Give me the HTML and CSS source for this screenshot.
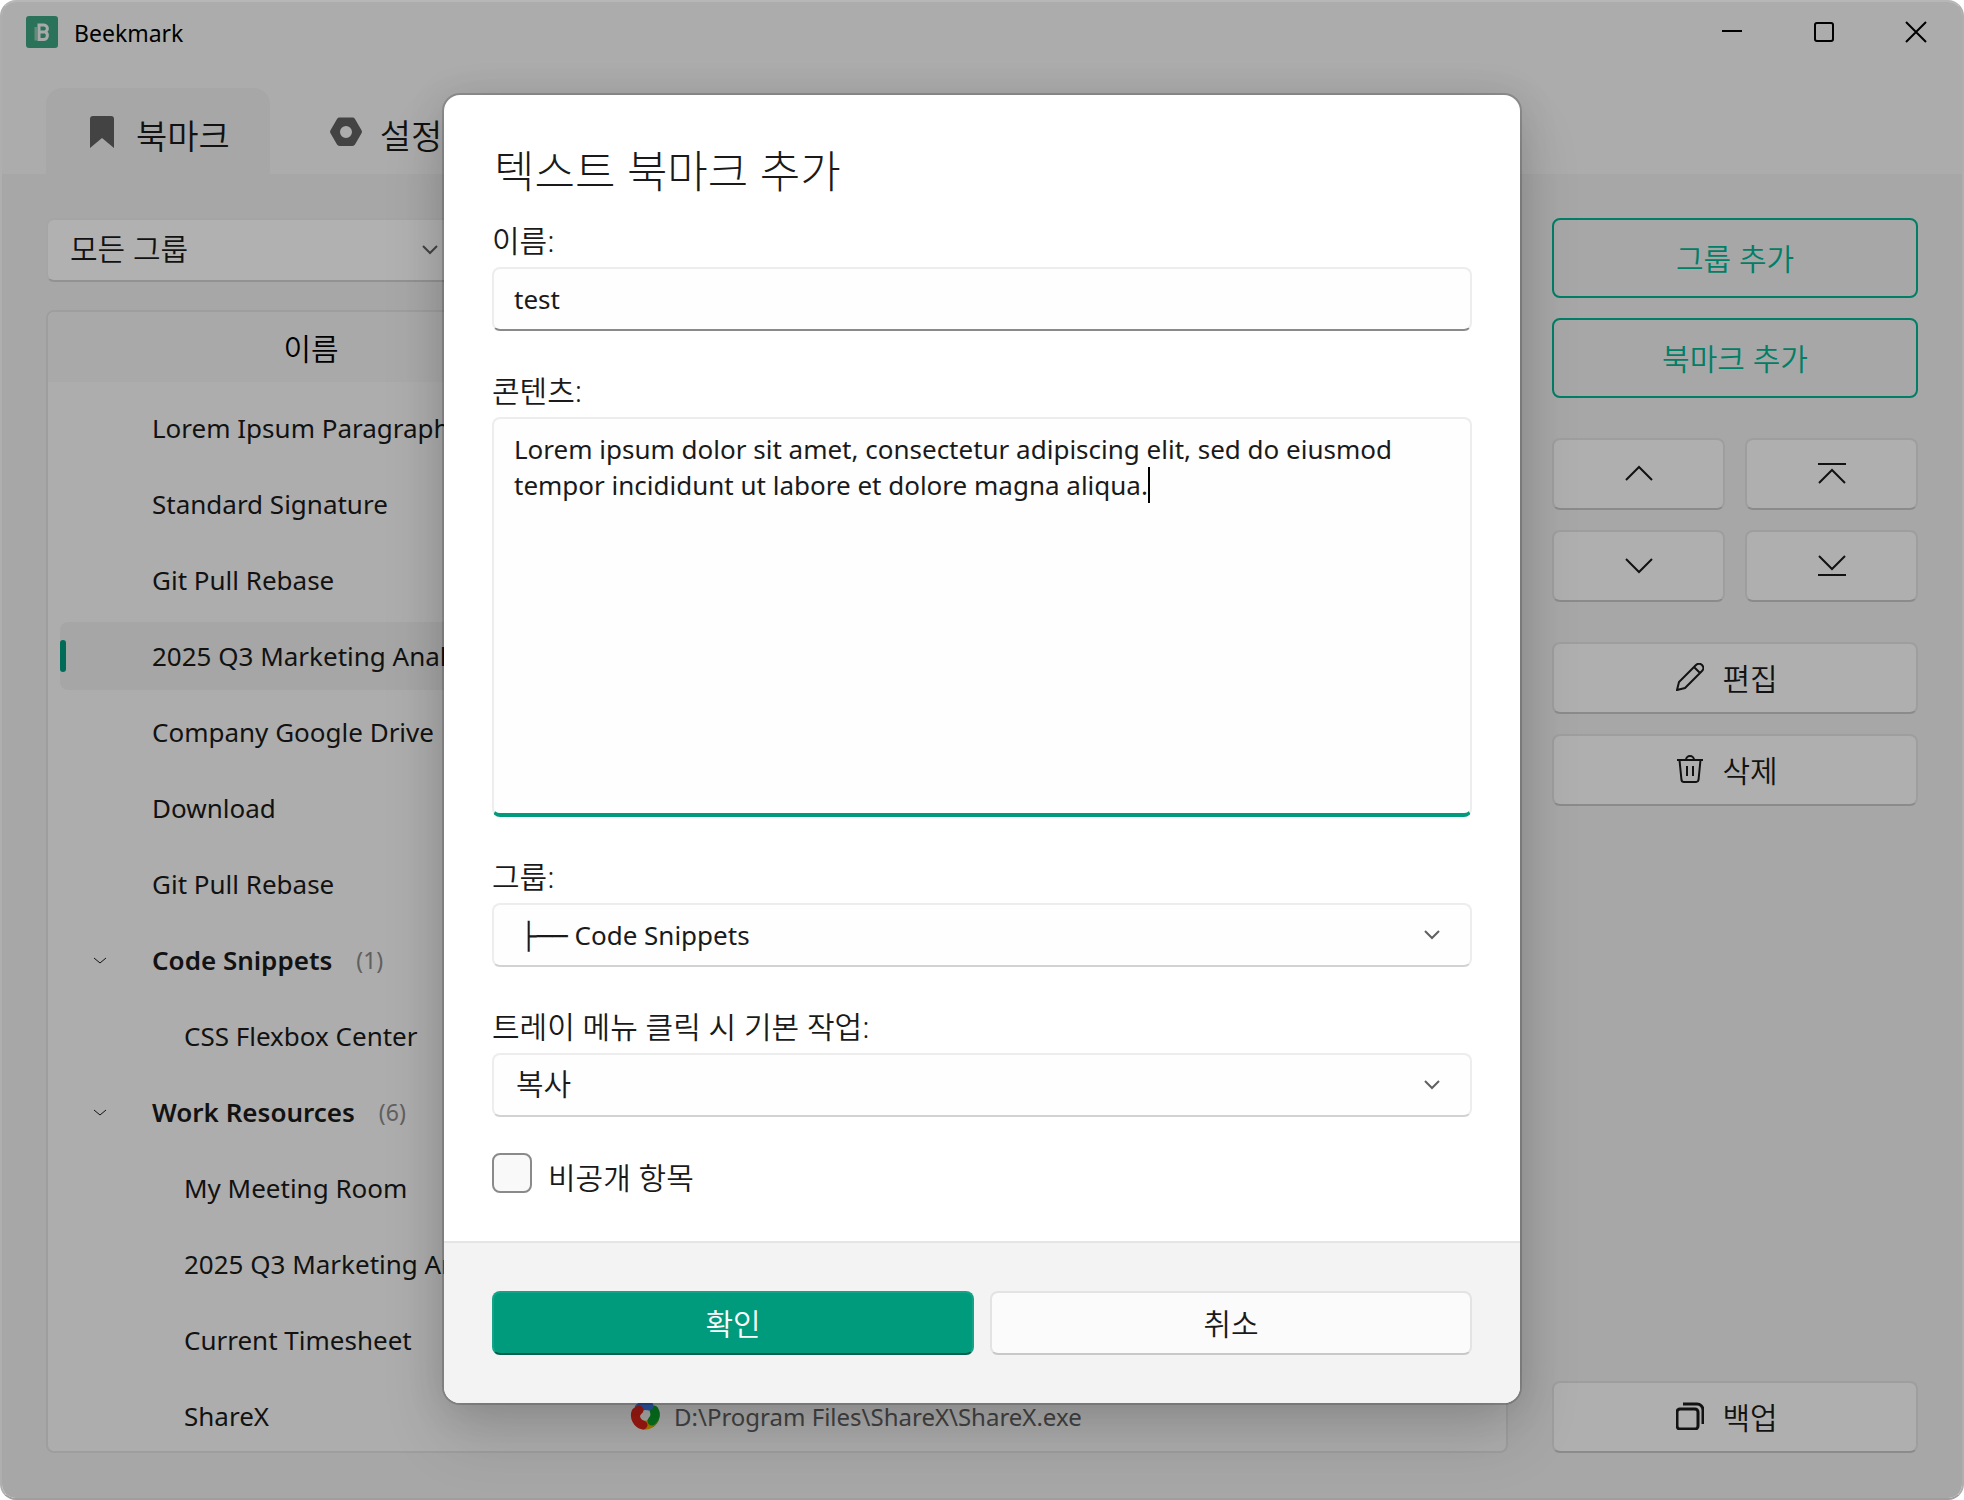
FILE: index.html
```
<!DOCTYPE html>
<html lang="ko">
<head>
    <meta charset="UTF-8">
    <meta name="viewport" content="width=device-width, initial-scale=1.0">
    <title>Beekmark</title>
    <link rel="stylesheet" href="styles.css">
</head>
<body>
    <div class="window">
        <header class="titlebar">
            <svg class="logo" viewBox="0 0 32 32">
                <rect width="32" height="32" rx="3" fill="#3da480"/>
                <path d="M8.500 11h2.500v13.500H8.500z" fill="#8fc9b4"/>
                <path d="M13 9v14.500h5a4 4 0 0 0 1-7.600A3.600 3.600 0 0 0 17 9zM13 16h5" fill="none" stroke="#f3f3f3" stroke-width="3"/>
            </svg>
            <span class="app-name">Beekmark</span>
            <div class="window-buttons">
                <button type="button" aria-label="Minimize"><svg viewBox="0 0 24 24"><path d="M2 11h20"/></svg></button>
                <button type="button" aria-label="Maximize"><svg viewBox="0 0 24 24"><rect x="3" y="3" width="18" height="18" rx="2"/></svg></button>
                <button type="button" aria-label="Close"><svg viewBox="0 0 24 24"><path d="M2 2l20 20M22 2L2 22"/></svg></button>
            </div>
        </header>

        <nav class="tabs">
            <a href="#bookmarks" class="tab active">
                <svg viewBox="0 0 32 32"><path d="M7 0h18a3 3 0 0 1 3 3v29L16 22 4 32V3a3 3 0 0 1 3-3z"/></svg>
                북마크
            </a>
            <a href="#settings" class="tab">
                <svg viewBox="0 0 32 32"><path fill-rule="evenodd" d="M9.500 1.500h13a3 3 0 0 1 2.500 1.400l6.500 11.300a3 3 0 0 1 0 3L25 28.600a3 3 0 0 1-2.500 1.400h-13A3 3 0 0 1 7 28.600L.5 17.200a3 3 0 0 1 0-3L7 2.900a3 3 0 0 1 2.500-1.400zM16 10a6 6 0 1 0 0 12 6 6 0 0 0 0-12z"/></svg>
                설정
            </a>
        </nav>

        <main class="content">
            <section class="bookmarks">
                <div class="select-box group-filter">
                    <select aria-label="그룹">
                        <option>모든 그룹</option>
                    </select>
                    <svg class="arrow" viewBox="0 0 16 10"><path d="M1 1l7 7 7-7"/></svg>
                </div>

                <div class="tree">
                    <table>
                        <colgroup>
                            <col class="col-name">
                            <col>
                        </colgroup>
                        <thead>
                            <tr><th>이름</th><th></th></tr>
                        </thead>
                        <tbody>
                            <tr><td><div class="item">Lorem Ipsum Paragraph</div></td><td></td></tr>
                            <tr><td><div class="item">Standard Signature</div></td><td></td></tr>
                            <tr><td><div class="item">Git Pull Rebase</div></td><td></td></tr>
                            <tr><td><div class="item selected">2025 Q3 Marketing Analysis</div></td><td></td></tr>
                            <tr><td><div class="item">Company Google Drive</div></td><td></td></tr>
                            <tr><td><div class="item">Download</div></td><td></td></tr>
                            <tr><td><div class="item">Git Pull Rebase</div></td><td></td></tr>
                            <tr><td><div class="item group"><svg viewBox="0 0 12 7"><path d="M0 1l6 5 6-5"/></svg>Code Snippets <span class="count">(1)</span></div></td><td></td></tr>
                            <tr><td><div class="item child">CSS Flexbox Center</div></td><td></td></tr>
                            <tr><td><div class="item group"><svg viewBox="0 0 12 7"><path d="M0 1l6 5 6-5"/></svg>Work Resources <span class="count">(6)</span></div></td><td></td></tr>
                            <tr><td><div class="item child">My Meeting Room</div></td><td></td></tr>
                            <tr><td><div class="item child">2025 Q3 Marketing Analysis</div></td><td></td></tr>
                            <tr><td><div class="item child">Current Timesheet</div></td><td></td></tr>
                            <tr>
                                <td><div class="item child">ShareX</div></td>
                                <td>
                                    <div class="value">
                                        <svg viewBox="0 0 30 30">
                                            <g fill="none" stroke-width="9" stroke-linecap="round">
                                                <path d="M24 9A10 10 0 0 1 21 22" stroke="#0ba52c"/>
                                                <path d="M24 18A10 10 0 0 1 13 24" stroke="#efb400"/>
                                                <path d="M13 24A10 10 0 0 1 6 11" stroke="#e3261b"/>
                                                <path d="M9 7A10 10 0 0 1 19 5" stroke="#3f7ee8"/>
                                                <path d="M6 13A10 10 0 0 1 9 9" stroke="#e3261b"/>
                                                <path d="M25 12A10 10 0 0 1 22 20" stroke="#0ba52c"/>
                                            </g>
                                        </svg>
                                        D:\Program Files\ShareX\ShareX.exe
                                    </div>
                                </td>
                            </tr>
                        </tbody>
                    </table>
                </div>
            </section>

            <aside class="actions">
                <button type="button" class="btn outline">그룹 추가</button>
                <button type="button" class="btn outline">북마크 추가</button>
                <div class="move-buttons">
                    <button type="button" class="btn" aria-label="위로"><svg viewBox="0 0 32 32"><path d="M3 23l13-13 13 13"/></svg></button>
                    <button type="button" class="btn" aria-label="맨 위로"><svg viewBox="0 0 32 32"><path d="M2 7h28M3 26l13-13 13 13"/></svg></button>
                    <button type="button" class="btn" aria-label="아래로"><svg viewBox="0 0 32 32"><path d="M3 10l13 13 13-13"/></svg></button>
                    <button type="button" class="btn" aria-label="맨 아래로"><svg viewBox="0 0 32 32"><path d="M3 7l13 13 13-13M2 26h28"/></svg></button>
                </div>
                <button type="button" class="btn icon-btn">
                    <svg viewBox="0 0 28 28"><path d="M1 27l2-8L20 2a4.200 4.200 0 0 1 6 6L9 25zM18 4l6 6"/></svg>
                    편집
                </button>
                <button type="button" class="btn icon-btn">
                    <svg viewBox="0 0 28 28"><path d="M1 5h26M10 5a4 4 0 0 1 8 0M3.500 5l2 20a2.500 2.500 0 0 0 2.500 2h12a2.500 2.500 0 0 0 2.500-2l2-20M11 11v10M17 11v10"/></svg>
                    삭제
                </button>
                <button type="button" class="btn icon-btn backup">
                    <svg viewBox="0 0 28 28"><rect x="1" y="7" width="21" height="20" rx="3"/><path d="M7 2h14a6 6 0 0 1 6 6v14"/></svg>
                    백업
                </button>
            </aside>
        </main>

        <div class="overlay">
            <form class="dialog" role="dialog" aria-labelledby="dialog-title">
                <div class="dialog-body">
                    <h1 id="dialog-title">텍스트 북마크 추가</h1>

                    <label for="name">이름:</label>
                    <input type="text" id="name" class="field" value="test">

                    <label for="contents">콘텐츠:</label>
                    <div class="text-box">
                        <textarea id="contents" class="field" spellcheck="false">Lorem ipsum dolor sit amet, consectetur adipiscing elit, sed do eiusmod tempor incididunt ut labore et dolore magna aliqua.</textarea>
                        <span class="caret"></span>
                    </div>

                    <label for="group">그룹:</label>
                    <div class="select-box">
                        <select id="group">
                            <option>&nbsp;├── Code Snippets</option>
                        </select>
                        <svg class="arrow" viewBox="0 0 16 10"><path d="M1 1l7 7 7-7"/></svg>
                    </div>

                    <label for="action">트레이 메뉴 클릭 시 기본 작업:</label>
                    <div class="select-box">
                        <select id="action" class="korean">
                            <option>복사</option>
                        </select>
                        <svg class="arrow" viewBox="0 0 16 10"><path d="M1 1l7 7 7-7"/></svg>
                    </div>

                    <div class="check-row">
                        <input type="checkbox" id="private">
                        <label for="private">비공개 항목</label>
                    </div>
                </div>

                <div class="dialog-footer">
                    <button type="submit" class="btn primary">확인</button>
                    <button type="button" class="btn">취소</button>
                </div>
            </form>
        </div>
    </div>
</body>
</html>
```
FILE: styles.css
```
* {
    box-sizing: border-box;
}

body {
    margin: 0;
    background-color: #fff;
    color: #1a1a1a;
    font-family: "Noto Sans", "DejaVu Sans", "Noto Sans CJK KR", sans-serif;
    font-size: 26px;
}

button, input, select, textarea {
    font-family: inherit;
    font-size: inherit;
    color: inherit;
}

svg {
    flex: none;
    fill: none;
    stroke: currentColor;
    stroke-width: 2;
}

.window {
    position: relative;
    display: flex;
    flex-direction: column;
    height: 100vh;
    border: 2px solid;
    border-color: #b7b7b7 #afafaf #9e9e9e;
    border-radius: 16px;
    background-color: #f7f7f7;
    overflow: hidden;
}

/* Title bar */
.titlebar {
    display: flex;
    align-items: center;
    height: 60px;
    padding-left: 24px;
    color: #000;
}

.logo {
    width: 32px;
    height: 32px;
    stroke: none;
}

.app-name {
    margin-left: 16px;
    padding-top: 2px;
    font-size: 23px;
}

.window-buttons {
    display: flex;
    margin-left: auto;
}

.window-buttons button {
    display: flex;
    justify-content: center;
    align-items: center;
    width: 92px;
    height: 60px;
    padding: 0;
    border: none;
    background: none;
}

.window-buttons svg {
    width: 24px;
    height: 24px;
}

/* Tabs */
.tabs {
    display: flex;
    margin-top: 26px;
    padding: 0 44px;
}

.tab {
    display: flex;
    align-items: center;
    gap: 18px;
    height: 86px;
    padding: 6px 40px 0;
    border-radius: 16px 16px 0 0;
    color: #1a1a1a;
    font-size: 34px;
    font-weight: 350;
    text-decoration: none;
}

.tab + .tab {
    padding-left: 60px;
}

.tab.active {
    background-color: #efefef;
}

.tab svg {
    width: 32px;
    height: 32px;
    margin-bottom: 4px;
    fill: #606060;
    stroke: none;
}

/* Content */
.content {
    display: flex;
    flex: 1;
    gap: 44px;
    min-height: 0;
    padding: 44px 44px 45px;
    background-color: #efefef;
}

.bookmarks {
    display: flex;
    flex: 1;
    flex-direction: column;
    gap: 28px;
    min-width: 0;
}

.group-filter {
    width: 424px;
}

.tree {
    flex: 1;
    min-height: 0;
    border: 2px solid #e2e2e2;
    border-radius: 8px;
    background-color: #f8f8f8;
    overflow: hidden;
}

.tree table {
    width: 100%;
    border-collapse: collapse;
    table-layout: fixed;
}

.col-name {
    width: 526px;
}

.tree th {
    height: 70px;
    padding: 0;
    background-color: #f2f2f2;
    color: #000;
    font-size: 30px;
    font-weight: 350;
}

.tree td {
    padding: 4px 0;
}

.tree tbody tr:first-child td {
    padding-top: 12px;
}

.item {
    position: relative;
    display: flex;
    align-items: center;
    height: 68px;
    margin-left: 12px;
    padding-left: 92px;
    border-radius: 8px;
    white-space: nowrap;
}

.item.child {
    padding-left: 124px;
}

.item.selected {
    background-color: #eee;
}

.item.selected::before {
    content: "";
    position: absolute;
    left: 0;
    width: 6px;
    height: 32px;
    border-radius: 3px;
    background-color: #009b7d;
}

.item.group {
    padding-left: 34px;
    font-weight: 600;
}

.item.group svg {
    width: 12px;
    height: 7px;
    margin-right: 46px;
    stroke-width: 1;
}

.count {
    margin-left: 24px;
    color: #8a8a8a;
    font-size: 23px;
    font-weight: 400;
}

.value {
    display: flex;
    align-items: center;
    gap: 14px;
    padding-left: 56px;
    color: #606060;
    font-size: 24px;
}

.value svg {
    width: 30px;
    height: 30px;
    stroke: none;
}

/* Buttons */
.btn {
    display: flex;
    justify-content: center;
    align-items: center;
    height: 72px;
    padding: 0 0 2px;
    border: 2px solid #e3e3e3;
    border-bottom-color: #c8c8c8;
    border-radius: 8px;
    background-color: #fbfbfb;
    font-size: 30px;
    font-weight: 350;
}

.actions {
    display: flex;
    flex-direction: column;
    gap: 20px;
    width: 366px;
}

.btn.outline {
    height: 80px;
    border-color: #00b592;
    background-color: transparent;
    color: #00b592;
}

.move-buttons {
    display: grid;
    grid-template-columns: 1fr 1fr;
    gap: 20px;
    margin: 20px 0;
}

.move-buttons svg {
    width: 32px;
    height: 32px;
}

.icon-btn {
    gap: 18px;
    padding-right: 16px;
}

.icon-btn svg {
    width: 28px;
    height: 28px;
}

.backup {
    margin-top: auto;
}

.backup svg {
    stroke-width: 3;
}

/* Fields */
.field,
.select-box select {
    display: block;
    width: 100%;
    height: 64px;
    padding: 0 20px;
    border: 2px solid #ededed;
    border-radius: 8px;
    background-color: #fefefe;
    outline: none;
}

#name {
    border-bottom-color: #8a8a8a;
}

.text-box {
    position: relative;
}

.text-box textarea {
    height: 400px;
    padding: 12px 20px;
    border-bottom: 4px solid #009b7d;
    line-height: 36px;
    resize: none;
}

.caret {
    position: absolute;
    top: 50px;
    left: 656px;
    width: 2px;
    height: 36px;
    background-color: #000;
}

.select-box {
    position: relative;
}

.select-box select {
    border-bottom-color: #d2d2d2;
    appearance: none;
}

.select-box .korean,
.group-filter select {
    padding: 0 22px 4px;
    font-size: 30px;
    font-weight: 350;
}

.arrow {
    position: absolute;
    top: 27px;
    right: 32px;
    width: 16px;
    height: 10px;
    color: #606060;
}

/* Dialog */
.overlay {
    position: absolute;
    inset: 0;
    display: flex;
    justify-content: center;
    align-items: center;
    padding-bottom: 2px;
    background-color: rgba(0, 0, 0, 0.3);
}

.dialog {
    width: 1076px;
    border-radius: 16px;
    background-color: #fff;
    box-shadow: 0 0 0 2px rgba(0, 0, 0, 0.16), 0 32px 64px rgba(0, 0, 0, 0.14), 0 4px 40px rgba(0, 0, 0, 0.12);
    overflow: hidden;
}

.dialog-body {
    padding: 48px;
}

.dialog h1 {
    margin: 0 0 22px;
    padding-left: 2px;
    font-size: 44px;
    font-weight: 300;
    line-height: 56px;
}

.dialog label {
    display: block;
    margin-bottom: 6px;
    font-size: 30px;
    font-weight: 350;
    line-height: 40px;
}

.field + label,
.text-box + label,
.select-box + label {
    margin-top: 40px;
}

.check-row {
    display: flex;
    align-items: center;
    gap: 16px;
    height: 40px;
    margin-top: 36px;
}

.check-row input {
    width: 40px;
    height: 40px;
    margin: 0;
    border: 2px solid #8a8a8a;
    border-radius: 8px;
    background-color: #f9f9f9;
    appearance: none;
}

.check-row label {
    margin: 0;
    padding-top: 10px;
}

.dialog-footer {
    display: grid;
    grid-template-columns: 1fr 1fr;
    gap: 16px;
    padding: 48px;
    border-top: 2px solid #e5e5e5;
    background-color: #f3f3f3;
}

.dialog-footer .btn {
    height: 64px;
}

.btn.primary {
    border-color: #14a387;
    border-bottom-color: #00604d;
    background-color: #009b7d;
    color: #fff;
}
```
